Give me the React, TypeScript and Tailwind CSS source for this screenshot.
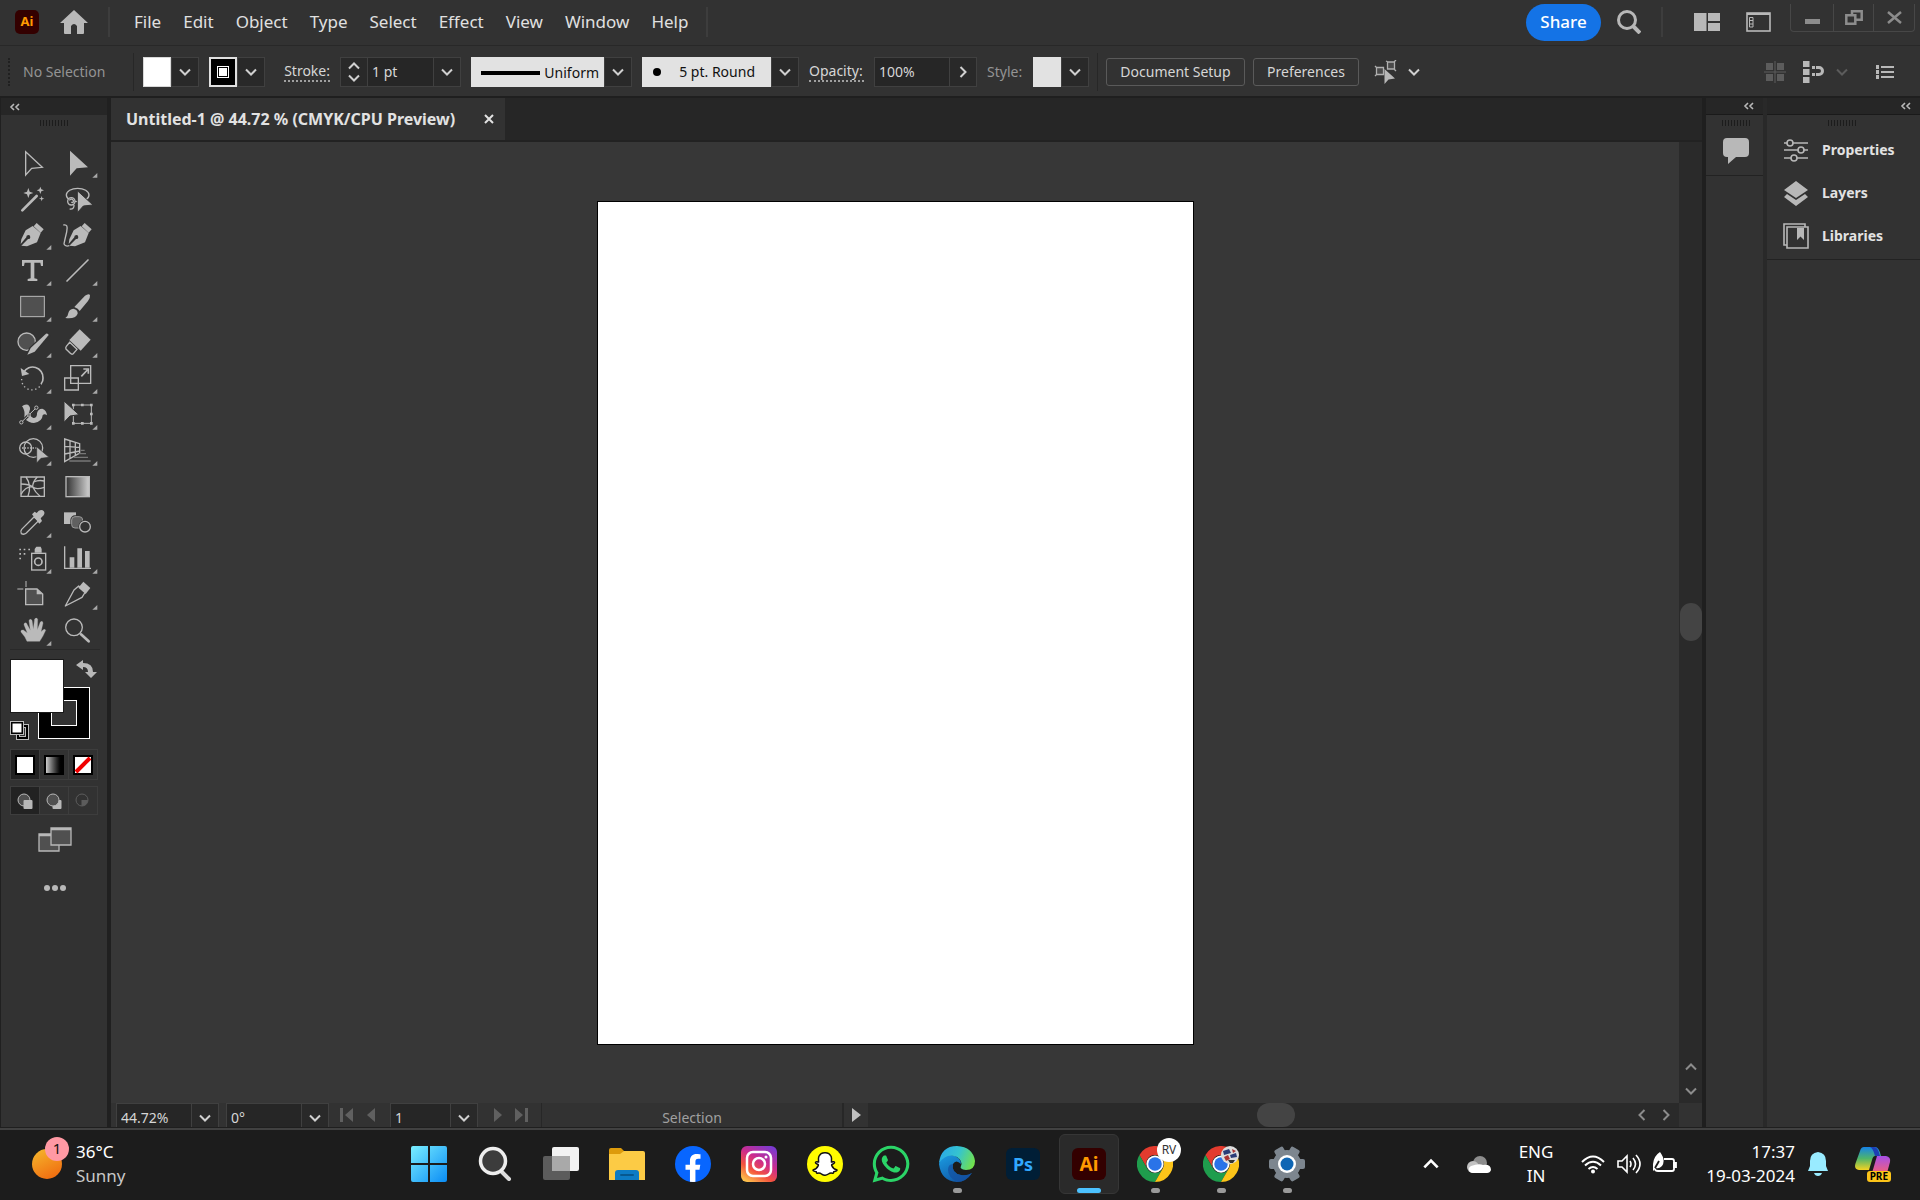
import type { ReactNode } from "react";
import { FaFacebookF, FaSnapchatGhost, FaWhatsapp } from "react-icons/fa";

const MENUS = ["File", "Edit", "Object", "Type", "Select", "Effect", "View", "Window", "Help"];

interface Tool {
  name: string;
  y: number;
  flyout?: boolean;
  icon: ReactNode;
}

// Tool icons are drawn three units to the pixel: left column starts at x=27, right column at x=165.
const LEFT_TOOLS: Tool[] = [
  {
    name: "Selection",
    y: 150,
    icon: <path d="M77 170V240L95 220L127 217Z" fill="none" stroke="#bababa" strokeWidth="4" />,
  },
  {
    name: "Magic Wand",
    y: 258,
    icon: (
      <>
        <path d="M67 346L110 303" stroke="#bababa" strokeWidth="8" strokeLinecap="round" />
        <path
          d="M85 279l4 11 11 4-11 4-4 11-4-11-11-4 11-4zM121 275l3 8 8 3-8 3-3 8-3-8-8-3 8-3zM125 303l2 6 6 2-6 2-2 6-2-6-6-2 6-2z"
          fill="#bababa"
        />
      </>
    ),
  },
  {
    name: "Pen",
    y: 366,
    flyout: true,
    icon: (
      <path
        d="M110 384l21 19-9 10-21-19zM98 393l24 21-11 28-30 12-17-2 20-20a6 6 0 1 0-5-5l-17 20 2-14 13-27z"
        fill="#bababa"
      />
    ),
  },
  {
    name: "Type",
    y: 474,
    flyout: true,
    icon: <path d="M66 495h63v18h-6l-2-10h-18v47l9 2v6H83v-6l9-2v-47H74l-2 10h-6z" fill="#bababa" />,
  },
  {
    name: "Rectangle",
    y: 582,
    flyout: true,
    icon: <rect x="62" y="604" width="71" height="61" fill="#505050" stroke="#bababa" strokeWidth="3" />,
  },
  {
    name: "Shaper",
    y: 690,
    flyout: true,
    icon: (
      <>
        <circle cx="80" cy="740" r="26" fill="#505050" stroke="#bababa" strokeWidth="4" />
        <path d="M84 779l8-18 46-45 8 8-44 46z" fill="#bababa" stroke="#323232" strokeWidth="10" />
        <path d="M82 779l10-20 46-43q6-2 8 4L104 770z" fill="#bababa" />
      </>
    ),
  },
  {
    name: "Rotate",
    y: 798,
    flyout: true,
    icon: (
      <>
        <path d="M71 832A31 31 0 0 1 129 849Q130 858 123 867" fill="none" stroke="#bababa" strokeWidth="5" />
        <path d="M62 819l4 24 22-6z" fill="#bababa" />
        <path d="M65 852A31 31 0 0 0 124 867" fill="none" stroke="#bababa" strokeWidth="4" strokeDasharray="4 8" />
      </>
    ),
  },
  {
    name: "Width",
    y: 906,
    flyout: true,
    icon: (
      <>
        <path
          d="M66 934q8-8 18-5q10 8 4 20q-2 14 12 20q12 0 11-14q2-14 16-14q13 5 14 20q-8-7-13 0q-1 19-26 23q-16 0-30-14q4-16-1-27q-2-6-5-9z"
          fill="#bababa"
        />
        <path d="M64 982L108 939" stroke="#323232" strokeWidth="9" />
        <path d="M64 982L108 939" stroke="#bababa" strokeWidth="3" />
        <g fill="#323232" stroke="#bababa" strokeWidth="3">
          <circle cx="64" cy="982" r="5" />
          <circle cx="87" cy="960" r="4" />
          <circle cx="109" cy="938" r="5" />
        </g>
      </>
    ),
  },
  {
    name: "Shape Builder",
    y: 1014,
    flyout: true,
    icon: (
      <>
        <g fill="none" stroke="#bababa" strokeWidth="4">
          <circle cx="100" cy="1059" r="28" />
          <circle cx="77" cy="1059" r="18" />
        </g>
        <path d="M66 1059h44" stroke="#bababa" strokeWidth="4" strokeDasharray="4 4" />
        <path d="M110 1055v49l13-14 24-3z" fill="#bababa" stroke="#323232" strokeWidth="2" />
      </>
    ),
  },
  {
    name: "Mesh",
    y: 1122,
    icon: (
      <g fill="none" stroke="#bababa" strokeWidth="4">
        <path d="M63 1146h70v58H63z" />
        <path d="M63 1167Q88 1167 98 1176T133 1177M63 1198Q78 1172 98 1176M78 1146Q96 1172 84 1204M112 1146Q98 1160 98 1176Q106 1192 120 1204M101 1161Q116 1154 133 1158" />
      </g>
    ),
  },
  {
    name: "Eyedropper",
    y: 1230,
    flyout: true,
    icon: (
      <>
        <path d="M102 1266L65 1303q-5 6-1 13q8 4 15-2l37-37z" fill="none" stroke="#bababa" strokeWidth="4" />
        <path d="M96 1258l8-8 6 4q8-12 18-8q9 6 3 15l-9 9 4 8-8 8z" fill="#bababa" />
      </>
    ),
  },
  {
    name: "Symbol Sprayer",
    y: 1338,
    flyout: true,
    icon: (
      <>
        <path d="M58 1361h5v5h-5zM71 1361h5v5h-5zM85 1361h5v5h-5zM58 1374h5v5h-5zM71 1374h5v5h-5zM58 1388h5v5h-5zM104 1362l5-7h13l3 7v11h-21z" fill="#bababa" />
        <rect x="95" y="1375" width="42" height="50" fill="none" stroke="#bababa" strokeWidth="4" />
        <circle cx="115" cy="1400" r="11" fill="none" stroke="#bababa" strokeWidth="5" />
      </>
    ),
  },
  {
    name: "Artboard",
    y: 1446,
    icon: (
      <>
        <path d="M78 1458v18M52 1482h18" stroke="#bababa" strokeWidth="3" />
        <path d="M77 1482h34l17 15v32H77z" fill="#505050" stroke="#bababa" strokeWidth="4" />
        <path d="M110 1482v16h18z" fill="#bababa" />
      </>
    ),
  },
  {
    name: "Hand",
    y: 1554,
    flyout: true,
    icon: (
      <path
        d="M81 1639q-5-14-18-28q-2-7 7-6l12 9-10-25q0-7 7-5l12 22-4-29q3-8 9-1l4 27 4-31q6-6 9 1l-1 31 9-23q7-5 8 3l-6 26 7-6q5-3 7 2q-8 19-18 33z"
        fill="#bababa"
        stroke="#bababa"
        strokeLinejoin="round"
      />
    ),
  },
];

const RIGHT_TOOLS: Tool[] = [
  { name: "Direct Selection", y: 150, flyout: true, icon: <path d="M210 167V242L230 220L264 217Z" fill="#bababa" /> },
  {
    name: "Lasso",
    y: 258,
    icon: (
      <>
        <ellipse cx="233" cy="300" rx="34" ry="20" fill="none" stroke="#bababa" strokeWidth="4" />
        <circle cx="214" cy="319" r="11" fill="#323232" stroke="#bababa" strokeWidth="4" />
        <path d="M208 316q6-8 12 0q1 10-6 5M209 342q14 2 13-12" fill="none" stroke="#bababa" strokeWidth="4" />
        <path d="M232 287v66l18-20 29-3z" fill="#bababa" stroke="#323232" strokeWidth="3" />
      </>
    ),
  },
  {
    name: "Curvature",
    y: 366,
    icon: (
      <>
        <path
          d="M254 384l21 19-9 10-21-19zM242 393l24 21-11 28-30 12-17-2 20-20a6 6 0 1 0-5-5l-17 20 2-14 13-27z"
          fill="#bababa"
        />
        <path d="M190 390q16-4 10 21t-8 36q4 9 16 5" fill="none" stroke="#bababa" strokeWidth="4" />
      </>
    ),
  },
  {
    name: "Line Segment",
    y: 474,
    flyout: true,
    icon: <path d="M201 558L264 495" stroke="#bababa" strokeWidth="5" strokeLinecap="round" />,
  },
  {
    name: "Paintbrush",
    y: 582,
    flyout: true,
    icon: (
      <path
        d="M196 669q8-4 9-15q3-12 15-13q14 3 13 15q-7 17-37 13zM223 636l32-34q11-8 15-2q1 10-6 18l-25 30q-4-8-16-12z"
        fill="#bababa"
      />
    ),
  },
  {
    name: "Eraser",
    y: 690,
    flyout: true,
    icon: (
      <>
        <path d="M239 703l33 31-30 33-34-32z" fill="#bababa" />
        <path d="M209 742l22 21-12 14q-4 2-8-2l-13-13q-2-4 1-8z" fill="none" stroke="#bababa" strokeWidth="4" />
      </>
    ),
  },
  {
    name: "Scale",
    y: 798,
    flyout: true,
    icon: (
      <>
        <path d="M212 812h60v53h-60zM194 849h41v36h-41z" fill="none" stroke="#bababa" strokeWidth="4" />
        <path d="M244 844l18-19M250 822h15v14" fill="none" stroke="#bababa" strokeWidth="5" />
      </>
    ),
  },
  {
    name: "Free Transform",
    y: 906,
    flyout: true,
    icon: (
      <>
        <rect x="220" y="930" width="54" height="55" fill="none" stroke="#bababa" strokeWidth="3" />
        <path d="M216 926h8v8h-8zM243 926h8v8h-8zM270 926h8v8h-8zM270 953h8v8h-8zM270 981h8v8h-8zM243 981h8v8h-8zM216 981h8v8h-8z" fill="#bababa" />
        <path d="M192 918v64l18-19 27-4z" fill="#bababa" stroke="#323232" strokeWidth="3" />
      </>
    ),
  },
  {
    name: "Perspective Grid",
    y: 1014,
    flyout: true,
    icon: (
      <>
        <path d="M194 1032l45 14v28l-45 26zM210 1037v53M226 1042v38M194 1054l45 3M194 1077l45-9" fill="none" stroke="#bababa" strokeWidth="4" />
        <path d="M242 1066h12M236 1076h22M222 1087h42M208 1098h64" stroke="#777" strokeWidth="4" />
      </>
    ),
  },
  {
    name: "Gradient",
    y: 1122,
    icon: (
      <>
        <defs>
          <linearGradient id="tool-gradient">
            <stop stopColor="#323232" />
            <stop offset="1" stopColor="#d0d0d0" />
          </linearGradient>
        </defs>
        <rect x="198" y="1145" width="70" height="60" fill="url(#tool-gradient)" stroke="#bababa" strokeWidth="4" />
      </>
    ),
  },
  {
    name: "Blend",
    y: 1230,
    icon: (
      <>
        <path d="M192 1252h36v35h-36z" fill="#bababa" />
        <rect x="215" y="1265" width="33" height="34" rx="10" fill="#606060" stroke="#323232" strokeWidth="8" />
        <rect x="215" y="1265" width="33" height="34" rx="10" fill="#606060" stroke="#999" strokeWidth="3" />
        <circle cx="255" cy="1295" r="20" fill="#323232" />
        <circle cx="255" cy="1295" r="16" fill="#323232" stroke="#bababa" strokeWidth="4" />
      </>
    ),
  },
  {
    name: "Column Graph",
    y: 1338,
    flyout: true,
    icon: (
      <>
        <path d="M194 1354v66h79" fill="none" stroke="#bababa" strokeWidth="4" />
        <path d="M209 1387h14v31h-14zM232 1360h14v58h-14zM255 1368h14v50h-14z" fill="#bababa" />
      </>
    ),
  },
  {
    name: "Slice",
    y: 1446,
    flyout: true,
    icon: (
      <>
        <path d="M196 1533l26-48 14-12 20 18-10 16z" fill="none" stroke="#bababa" strokeWidth="4" strokeLinejoin="round" />
        <path d="M250 1460l21 19-14 18-22-19z" fill="#bababa" />
      </>
    ),
  },
  {
    name: "Zoom",
    y: 1554,
    icon: (
      <>
        <circle cx="222" cy="1597" r="25" fill="none" stroke="#bababa" strokeWidth="4" />
        <path d="M243 1618l23 21" stroke="#bababa" strokeWidth="8" strokeLinecap="round" />
      </>
    ),
  },
];

function ToolColumn({ tools, x }: { tools: Tool[]; x: number }) {
  return (
    <div className="flex flex-col">
      {tools.map((tool) => (
        <button key={tool.name} aria-label={tool.name} className="h-9 w-[46px]">
          <svg viewBox={`${x} ${tool.y} 138 108`} className="h-9 w-[46px]">
            {tool.icon}
            {tool.flyout && <path d={`M${x + 127} ${tool.y + 84}v14h-15z`} fill="#a8a8a8" />}
          </svg>
        </button>
      ))}
    </div>
  );
}

function Chevron({ dir = "down", className = "h-3 w-3 text-[#d0d0d0]" }: { dir?: "down" | "up" | "left" | "right"; className?: string }) {
  const paths = {
    down: "M1 3.5L6 8.5L11 3.5",
    up: "M1 8.5L6 3.5L11 8.5",
    left: "M8.5 1L3.5 6L8.5 11",
    right: "M3.5 1L8.5 6L3.5 11",
  };
  return (
    <svg viewBox="0 0 12 12" className={className}>
      <path d={paths[dir]} fill="none" stroke="currentColor" strokeWidth="2" />
    </svg>
  );
}

function DropButton({ label, dir = "down" }: { label: string; dir?: "down" | "right" }) {
  return (
    <button aria-label={label} className="flex h-full w-7 shrink-0 items-center justify-center border border-[#404040] bg-[#292929]">
      <Chevron dir={dir} />
    </button>
  );
}

function Divider() {
  return <div className="h-[38px] w-px shrink-0 bg-[#272727]" />;
}

function Grip() {
  return (
    <div className="flex h-[6px] justify-center gap-[2px]">
      {Array.from({ length: 10 }, (_, i) => (
        <i key={i} className="w-px bg-[#1c1c1c]" />
      ))}
    </div>
  );
}

function DoubleChevron() {
  return (
    <svg viewBox="0 0 12 8" className="h-2 w-3">
      <path d="M5 1L2 4L5 7M10 1L7 4L10 7" fill="none" stroke="#b8b8b8" strokeWidth="1.6" />
    </svg>
  );
}

function TitleBar() {
  return (
    <header className="flex h-[46px] shrink-0 items-center border-b border-[#282828] pb-px">
      <div className="ml-[15px] flex h-6 w-6 items-center justify-center rounded-[5px] bg-[#330000] text-[13px] font-bold text-[#ff9a00]">
        Ai
      </div>
      <button aria-label="Home" className="ml-[21px]">
        <svg viewBox="0 0 28 24" className="h-6 w-7">
          <path d="M14 0L28 13H24V23Q24 24 23 24H17V16Q14 12 11 16V24H5Q4 24 4 23V13H0Z" fill="#b8b8b8" />
        </svg>
      </button>
      <div className="ml-5 h-[30px] w-[2px] bg-[#3d3d3d]" />
      <nav className="ml-6 flex gap-[22px] pb-px text-[17px] leading-6 text-[#e0e0e0]">
        {MENUS.map((menu) => (
          <button key={menu}>{menu}</button>
        ))}
      </nav>
      <div className="ml-[18px] h-[30px] w-[2px] bg-[#3d3d3d]" />
      <div className="ml-auto flex items-center">
        <button className="h-[37px] w-[75px] rounded-full bg-[#1473e6] text-[17px] font-medium text-white">Share</button>
        <button aria-label="Search" className="ml-4">
          <svg viewBox="0 0 24 24" className="h-6 w-6" fill="none" stroke="#b8b8b8" strokeWidth="3">
            <circle cx="10" cy="10" r="8.5" />
            <path d="M16 16l7 7" strokeWidth="4" />
          </svg>
        </button>
        <div className="ml-5 h-[30px] w-[2px] bg-[#3d3d3d]" />
        <button aria-label="Arrange documents" className="ml-[31px]">
          <svg viewBox="0 0 26 18" className="h-[18px] w-[26px]" fill="#b8b8b8">
            <path d="M0 0h12.500v18H0zM14 0h12v8H14zM14 10h12v8H14z" />
          </svg>
        </button>
        <button aria-label="Workspace" className="ml-[26px]">
          <svg viewBox="0 0 25 20" className="h-5 w-[25px]" fill="none" stroke="#b8b8b8">
            <rect x="1" y="1" width="23" height="18" strokeWidth="1.600" />
            <path d="M1 2h23" strokeWidth="2" />
            <path d="M3.500 5.500h3.500v9.500h-3.500zM4 8.500h3M4 12h3" />
          </svg>
        </button>
        <div className="mr-[5px] ml-[19px] flex h-7 self-start rounded-b border-x border-b border-[#474747]">
          <button aria-label="Minimize" className="flex w-[42px] items-center justify-center">
            <i className="mt-2 h-[5px] w-[15px] bg-[#8c8c8c]" />
          </button>
          <button aria-label="Restore" className="flex w-[41px] items-center justify-center border-x border-[#474747]">
            <svg viewBox="0 0 18 15" className="h-[15px] w-[18px]" fill="none" stroke="#8c8c8c" strokeWidth="2.500">
              <path d="M1.300 5.300h9v8.400h-9zM7 5V1.300h9.700v8.400H11" />
            </svg>
          </button>
          <button aria-label="Close" className="flex w-10 items-center justify-center">
            <svg viewBox="0 0 15 13" className="h-[13px] w-[15px]" stroke="#8c8c8c" strokeWidth="2.500">
              <path d="M1 1l13 11M14 1L1 12" />
            </svg>
          </button>
        </div>
      </div>
    </header>
  );
}

function ControlBar() {
  return (
    <div className="flex h-[52px] shrink-0 items-center gap-[10px] border-b-2 border-[#1f1f1f] pt-[2px] pl-2 text-[14px] leading-5 whitespace-nowrap text-[#d6d6d6]">
      <div className="flex w-[115px] items-center gap-[13px]">
        <div className="h-7 border-l-2 border-dotted border-[#202020]" />
        <span className="text-[#949494]">No Selection</span>
      </div>
      <div className="flex items-center gap-[9px]">
        <Divider />
        <div className="flex h-[30px]">
          <button aria-label="Fill" className="w-7 border border-[#d8d8d8] bg-white" />
          <DropButton label="Fill options" />
        </div>
      </div>
      <div className="flex h-[30px]">
        <button aria-label="Stroke color" className="flex w-7 items-center justify-center border-2 border-[#e0e0e0] bg-black">
          <i className="h-3 w-3 border border-white bg-black p-px">
            <i className="block h-2 w-2 bg-white" />
          </i>
        </button>
        <DropButton label="Stroke color options" />
      </div>
      <div className="flex w-[55px] justify-end">
        <label htmlFor="stroke-weight" className="border-b-2 border-dotted border-[#a0a0a0] leading-[18px]">
          Stroke:
        </label>
      </div>
      <div className="flex h-[30px] w-[121px]">
        <div className="flex w-7 shrink-0 flex-col items-center justify-between border border-[#404040] bg-[#292929] py-[2px]">
          <button aria-label="Increase">
            <Chevron dir="up" />
          </button>
          <button aria-label="Decrease">
            <Chevron />
          </button>
        </div>
        <input
          id="stroke-weight"
          defaultValue="1 pt"
          className="w-0 min-w-0 flex-1 border-y border-[#404040] bg-[#262626] px-1 outline-none"
        />
        <DropButton label="Stroke weights" />
      </div>
      <div className="flex h-[30px] w-[161px]">
        <button className="flex flex-1 items-center justify-between bg-[#e2e2e2] pt-[2px] pr-[5px] pl-[10px] text-[#111]">
          <i className="h-1 w-[59px] bg-black" />
          Uniform
        </button>
        <DropButton label="Width profiles" />
      </div>
      <div className="flex h-[30px] w-[157px]">
        <button className="flex flex-1 items-center justify-between bg-[#e2e2e2] pr-4 pl-[11px] text-[#111]">
          <i className="h-2 w-2 rounded-full bg-black" />
          5 pt. Round
        </button>
        <DropButton label="Brushes" />
      </div>
      <label htmlFor="opacity" className="w-[55px] border-b-2 border-dotted border-[#a0a0a0] leading-[18px]">
        Opacity:
      </label>
      <div className="flex h-[30px] w-[103px]">
        <input
          id="opacity"
          defaultValue="100%"
          className="w-0 min-w-0 flex-1 border-y border-l border-[#404040] bg-[#262626] px-1 outline-none"
        />
        <DropButton label="Opacity slider" dir="right" />
      </div>
      <span className="w-9 text-[#949494]">Style:</span>
      <div className="flex items-center gap-2">
        <div className="flex h-[30px]">
          <button aria-label="Graphic style" className="w-7 bg-[#e2e2e2]" />
          <DropButton label="Graphic styles" />
        </div>
        <Divider />
        <button className="h-7 w-[139px] rounded-[3px] border border-[#5a5a5a]">Document Setup</button>
        <button className="h-7 w-[106px] rounded-[3px] border border-[#5a5a5a]">Preferences</button>
      </div>
      <button aria-label="Select similar objects" className="ml-[5px] flex items-center gap-[10px]">
        <svg viewBox="0 0 24 24" className="h-6 w-6" fill="#4a4a4a" stroke="#b0b0b0" strokeWidth="1.300">
          <path d="M2.500 7.500h7v7h-7zM13.500 2h7v7h-7zM1 6l2 2M1 16l2-2M12 1l2 1M22 0l-2 2M22 11l-2-2" />
          <path d="M10.500 9v15l4-4.500 6.500-1z" fill="#b8b8b8" stroke="none" />
        </svg>
        <Chevron />
      </button>
      <div className="mr-[26px] ml-auto flex items-center">
        <svg viewBox="0 0 22 22" className="h-[22px] w-[22px]" fill="#5c5c5c">
          <path d="M2 2h7v7H2zM13 2h7v7h-7zM2 13h7v7H2zM13 13h7v7h-7zM10.500 0h1v22h-1zM0 10.500h22v1H0z" />
        </svg>
        <button aria-label="Snap to glyph" className="ml-[17px]">
          <svg viewBox="0 0 22 22" className="h-[22px] w-[22px]" fill="#b8b8b8">
            <path d="M0 0h6.500v6H0zM0 8h6.500v6H0zM0 16h6.500v6H0zM9 5h3v3H9zM9 12h3v3H9z" />
            <path d="M13 6.500h3a3.500 3.500 0 0 1 0 7h-3" fill="none" stroke="#b8b8b8" strokeWidth="3" />
          </svg>
        </button>
        <Chevron className="ml-[11px] h-3 w-3 text-[#5c5c5c]" />
        <button aria-label="Panel menu" className="ml-7">
          <svg viewBox="0 0 18 14" className="h-[14px] w-[18px]" fill="#b8b8b8">
            <path d="M0 0h3v4H0zM0 5h3v4H0zM0 10h3v4H0zM5 1h13v2H5zM5 6h13v2H5zM5 11h13v2H5z" />
          </svg>
        </button>
      </div>
    </div>
  );
}

function Toolbar() {
  return (
    <aside className="flex w-[111px] shrink-0 flex-col border-r-4 border-l border-[#202020]">
      <div className="flex h-[17px] shrink-0 items-center bg-[#262626] pl-2">
        <DoubleChevron />
      </div>
      <div className="h-[30px] pt-[5px]">
        <Grip />
      </div>
      <div className="ml-2 flex">
        <ToolColumn tools={LEFT_TOOLS} x={27} />
        <ToolColumn tools={RIGHT_TOOLS} x={165} />
      </div>
      <div className="ml-[9px] w-[90px] border-t border-[#292929] pt-2">
        <svg viewBox="0 0 88 84" className="h-[84px] w-[88px]">
          <rect x="28.500" y="29.500" width="51" height="51" fill="#000" stroke="#fff" />
          <rect x="41.500" y="42.500" width="25" height="25" fill="#323232" stroke="#fff" />
          <rect x=".5" y="1.500" width="53" height="53" fill="#fff" stroke="#1a1a1a" />
          <path d="M66 7l7-5v3q10 0 10 9h4l-6 6-6-6h3q0-5-5-5v3z" fill="#b8b8b8" />
          <path d="M8 72v8h9V68h-4" fill="none" stroke="#bbb" strokeWidth="4" />
          <path d="M8 72v8h9V68h-4" fill="none" stroke="#000" strokeWidth="2" />
          <rect x="1.500" y="64.500" width="11" height="11" fill="#fff" stroke="#000" strokeWidth="2" />
          <rect x=".5" y="63.500" width="13" height="13" fill="none" stroke="#bbb" />
        </svg>
      </div>
      <div className="mt-[7px] ml-[9px] flex h-[31px] w-[88px] divide-x divide-[#3d3d3d] border border-[#3d3d3d]">
        <button aria-label="Color" className="flex flex-1 items-center justify-center bg-[#222]">
          <i className="h-5 w-5 border-2 border-black bg-white" />
        </button>
        <button aria-label="Gradient fill" className="flex flex-1 items-center justify-center">
          <i className="h-5 w-5 border-2 border-black bg-linear-to-r from-[#ccc] to-black" />
        </button>
        <button aria-label="None" className="flex flex-1 items-center justify-center">
          <svg viewBox="0 0 20 20" className="h-5 w-5">
            <rect x="1" y="1" width="18" height="18" fill="#fff" stroke="#000" strokeWidth="2" />
            <path d="M3 17L17 3" stroke="#f00000" strokeWidth="4" />
          </svg>
        </button>
      </div>
      <div className="mt-[6px] ml-[9px] flex h-[29px] w-[88px] divide-x divide-[#3d3d3d] border border-[#3d3d3d]">
        <button aria-label="Draw Normal" className="flex flex-1 items-center justify-center bg-[#222]">
          <svg viewBox="0 0 16 16" className="h-4 w-4">
            <circle cx="7" cy="7" r="6" fill="#505050" stroke="#b8b8b8" />
            <rect x="6.500" y="7" width="9" height="9" rx="1" fill="#b8b8b8" />
          </svg>
        </button>
        <button aria-label="Draw Behind" className="flex flex-1 items-center justify-center">
          <svg viewBox="0 0 16 16" className="h-4 w-4">
            <rect x="6.500" y="7" width="9" height="9" rx="1" fill="#b8b8b8" />
            <circle cx="7" cy="7" r="6" fill="#505050" stroke="#b8b8b8" />
          </svg>
        </button>
        <button aria-label="Draw Inside" disabled className="flex flex-1 items-center justify-center">
          <svg viewBox="0 0 16 16" className="h-4 w-4">
            <circle cx="7" cy="7" r="6" fill="none" stroke="#5c5c5c" />
            <path d="M6.500 7h6.500a6 6 0 0 1-6.500 6z" fill="#5c5c5c" />
          </svg>
        </button>
      </div>
      <button aria-label="Screen mode" className="mt-[12px] ml-[37px] w-[34px]">
        <svg viewBox="0 0 34 26" className="h-[26px] w-[34px]" fill="#505050" stroke="#b8b8b8" strokeWidth="1.300">
          <path d="M1 7h20v17H1zM1 8.500h20" />
          <path d="M13 1h20v17H13zM13 2.500h20" />
        </svg>
      </button>
      <button aria-label="Edit toolbar" className="mt-8 ml-[43px] flex gap-[2px]">
        <i className="h-[6px] w-[6px] rounded-full bg-[#b8b8b8]" />
        <i className="h-[6px] w-[6px] rounded-full bg-[#b8b8b8]" />
        <i className="h-[6px] w-[6px] rounded-full bg-[#b8b8b8]" />
      </button>
    </aside>
  );
}

function StatusField({ label, value, width }: { label: string; value: string; width: string }) {
  return (
    <div className={`flex h-[30px] shrink-0 ${width}`}>
      <input
        aria-label={label}
        defaultValue={value}
        className="w-0 min-w-0 flex-1 border border-r-0 border-[#404040] bg-[#262626] px-1 outline-none"
      />
      <DropButton label={`${label} presets`} />
    </div>
  );
}

function StepButton({ label, d }: { label: string; d: string }) {
  return (
    <button aria-label={label} disabled>
      <svg viewBox="0 0 14 14" className="h-[14px] w-[14px]" fill="#606060">
        <path d={d} />
      </svg>
    </button>
  );
}

function StatusBar() {
  return (
    <div className="flex h-6 shrink-0 overflow-hidden bg-[#2a2a2a] text-[14px] leading-6 text-[#d6d6d6]">
      <div className="flex w-[757px] shrink-0 bg-[#323232] pl-[5px]">
        <StatusField label="Zoom level" value="44.72%" width="w-[103px]" />
        <div className="w-[7px]" />
        <StatusField label="Rotate view" value="0°" width="w-[103px]" />
        <div className="flex w-[61px] items-center justify-center gap-[11px]">
          <StepButton label="First artboard" d="M0 0h3v14H0zM13 0v14L5 7z" />
          <StepButton label="Previous artboard" d="M10 0v14L2 7z" />
        </div>
        <StatusField label="Artboard" value="1" width="w-[88px]" />
        <div className="flex w-[64px] items-center justify-center gap-2 border-r border-[#272727]">
          <StepButton label="Next artboard" d="M2 0v14l8-7z" />
          <StepButton label="Last artboard" d="M11 0h3v14h-3zM1 0v14l8-7z" />
        </div>
        <div className="flex-1 border-r-2 border-[#272727] pt-[3px] text-center text-[#a0a0a0]">Selection</div>
        <button aria-label="Status options" className="w-6 pl-2">
          <svg viewBox="0 0 9 14" className="h-[14px] w-[9px]" fill="#c0c0c0">
            <path d="M0 0v14l9-7z" />
          </svg>
        </button>
      </div>
      <div className="flex flex-1 items-center">
        <div className="ml-[48%] h-full w-[38px] rounded-xl bg-[#444]" />
        <button aria-label="Scroll left" className="ml-auto">
          <Chevron dir="left" className="h-3 w-3 text-[#8c8c8c]" />
        </button>
        <button aria-label="Scroll right" className="mr-[7px] ml-3">
          <Chevron dir="right" className="h-3 w-3 text-[#8c8c8c]" />
        </button>
      </div>
      <div className="w-[23px] bg-[#323232]" />
    </div>
  );
}

function DocumentArea() {
  return (
    <main className="flex min-w-0 flex-1 flex-col">
      <div className="flex h-[44px] shrink-0 border-b-2 border-[#222] bg-[#262626]">
        <div className="flex w-[394px] items-center justify-between bg-[#323232] pr-[11px] pl-[15px] text-[16px] font-bold text-[#e2e2e2]">
          <span className="whitespace-nowrap">Untitled-1 @ 44.72 % (CMYK/CPU Preview)</span>
          <button aria-label="Close document">
            <svg viewBox="0 0 10 10" className="h-[10px] w-[10px]" stroke="#e2e2e2" strokeWidth="2">
              <path d="M1 1l8 8M9 1L1 9" />
            </svg>
          </button>
        </div>
      </div>
      <div className="flex min-h-0 flex-1">
        <div className="flex flex-1 items-center justify-center bg-[#373737]">
          <div className="h-[842px] w-[595px] bg-white outline outline-black" />
        </div>
        <div className="flex w-[23px] flex-col items-center bg-[#2a2a2a]">
          <div className="h-[48%]" />
          <div className="h-[38px] w-[22px] rounded-xl bg-[#444]" />
          <button aria-label="Scroll up" className="mt-auto">
            <Chevron dir="up" className="h-3 w-3 text-[#8c8c8c]" />
          </button>
          <button aria-label="Scroll down" className="mt-3 mb-[6px]">
            <Chevron className="h-3 w-3 text-[#8c8c8c]" />
          </button>
        </div>
      </div>
      <StatusBar />
    </main>
  );
}

function PanelRow({ label, children }: { label: string; children: ReactNode }) {
  return (
    <button className="flex h-[42px] items-center gap-[13px] pl-4">
      <svg viewBox="0 0 26 26" className="h-[26px] w-[26px]">
        {children}
      </svg>
      {label}
    </button>
  );
}

function Panels() {
  return (
    <>
      <aside className="flex w-[61px] shrink-0 flex-col border-l-4 border-[#1f1f1f]">
        <div className="flex h-[17px] items-center justify-end border-b border-[#1a1a1a] bg-[#262626] pr-2">
          <DoubleChevron />
        </div>
        <div className="flex h-[61px] flex-col items-center gap-3 border-b border-[#222] pt-[5px] pl-[2px]">
          <Grip />
          <button aria-label="Comments">
            <svg viewBox="0 0 26 26" className="h-[26px] w-[26px]">
              <path d="M4 0h18q4 0 4 4v11q0 4-4 4H13l-8 7v-7H4q-4 0-4-4V4q0-4 4-4z" fill="#b8b8b8" />
            </svg>
          </button>
        </div>
      </aside>
      <aside className="flex w-[157px] shrink-0 flex-col border-l-4 border-[#292929]">
        <div className="flex h-[17px] shrink-0 items-center justify-end border-b border-[#1a1a1a] bg-[#262626] pr-2">
          <DoubleChevron />
        </div>
        <div className="flex flex-col gap-px border-b border-[#222] pt-[5px] pb-[2px] text-[14px] leading-5 font-bold text-[#e2e2e2]">
          <div className="pr-1 pb-[2px]">
            <Grip />
          </div>
          <PanelRow label="Properties">
            <g fill="#323232" stroke="#b8b8b8" strokeWidth="1.600">
              <path d="M1 6h24M1 13h24M1 21h24" />
              <circle cx="7" cy="6" r="3" />
              <circle cx="18" cy="13" r="3" />
              <circle cx="11" cy="21" r="3" />
            </g>
          </PanelRow>
          <PanelRow label="Layers">
            <path d="M13 1L25 10L13 18L1 10ZM4 14L13 20L22 14L25 17L13 26L1 17Z" fill="#b8b8b8" />
          </PanelRow>
          <PanelRow label="Libraries">
            <path d="M4 22H1V1h21v3M4 4h21v21H4z" fill="none" stroke="#b8b8b8" strokeWidth="1.600" />
            <path d="M14 5h7v12l-3.500-3.500L14 17z" fill="#b8b8b8" />
          </PanelRow>
        </div>
      </aside>
    </>
  );
}

function Chrome({ children }: { children: ReactNode }) {
  return (
    <span className="relative">
      <svg viewBox="0 0 48 48" className="h-9 w-9">
        <path d="M24 12H44.800A24 24 0 0 0 3.200 12L13.600 30A12 12 0 0 1 24 12z" fill="#e33b2e" />
        <path d="M13.600 30L3.200 12A24 24 0 0 0 24 48L34.400 30A12 12 0 0 1 13.600 30z" fill="#1f9d4d" />
        <path d="M24 12H44.800A24 24 0 0 1 24 48L34.400 30A12 12 0 0 0 24 12z" fill="#fcc419" />
        <circle cx="24" cy="24" r="11.500" fill="#fff" />
        <circle cx="24" cy="24" r="9" fill="#2a73e8" />
      </svg>
      {children}
    </span>
  );
}

const APPS: { name: string; state?: "open" | "active"; icon: ReactNode }[] = [
  {
    name: "Start",
    icon: (
      <svg viewBox="0 0 36 36" className="h-9 w-9">
        <defs>
          <linearGradient id="start" x1="0" y1="0" x2="36" y2="36" gradientUnits="userSpaceOnUse">
            <stop stopColor="#7aefff" />
            <stop offset="1" stopColor="#0a8cf5" />
          </linearGradient>
        </defs>
        <path d="M2 0H17V17H0V2Q0 0 2 0zM19 0H34Q36 0 36 2V17H19zM0 19H17V36H2Q0 36 0 34zM19 19H36V34Q36 36 34 36H19z" fill="url(#start)" />
      </svg>
    ),
  },
  {
    name: "Search",
    icon: (
      <svg viewBox="0 0 36 36" className="h-9 w-9">
        <path d="M24 25L32 33" stroke="#ddd" strokeWidth="4" strokeLinecap="round" />
        <circle cx="16" cy="15" r="12.500" fill="#3c3c3c" stroke="#eee" strokeWidth="3.500" />
      </svg>
    ),
  },
  {
    name: "Task View",
    icon: (
      <svg viewBox="0 0 36 36" className="h-9 w-9">
        <rect y="10" width="27" height="24" rx="2" fill="#5c5c5c" />
        <rect x="9" y="1" width="27" height="24" rx="2" fill="#f2f2f2" />
        <path d="M9 10h18v15H9z" fill="#a9a9a9" />
      </svg>
    ),
  },
  {
    name: "File Explorer",
    icon: (
      <svg viewBox="0 0 36 36" className="h-9 w-9">
        <path d="M0 4Q0 2 2 2H12L15 5V9H0z" fill="#dd9b0c" />
        <path d="M0 8H11L15 5H34Q36 5 36 7V34H0z" fill="#fccb45" />
        <path d="M6 34V27Q6 24 9 24H27Q30 24 30 27V34z" fill="#0d7bc4" />
        <path d="M12 29H24" stroke="#07588f" strokeWidth="2" strokeLinecap="round" />
      </svg>
    ),
  },
  {
    name: "Facebook",
    icon: (
      <span className="flex h-9 w-9 items-end justify-center overflow-hidden rounded-full bg-[#0866ff]">
        <FaFacebookF className="h-7 w-7 text-white" />
      </span>
    ),
  },
  {
    name: "Instagram",
    icon: (
      <svg viewBox="0 0 36 36" className="h-9 w-9" fill="none" stroke="#fff" strokeWidth="2.500">
        <defs>
          <linearGradient id="insta" x1=".2" y1="1" x2=".8" y2="0">
            <stop stopColor="#fdc04c" />
            <stop offset=".3" stopColor="#f4533e" />
            <stop offset=".6" stopColor="#cc2c8e" />
            <stop offset="1" stopColor="#7b3ad1" />
          </linearGradient>
        </defs>
        <rect width="36" height="36" rx="6" fill="url(#insta)" stroke="none" />
        <rect x="6" y="6" width="24" height="24" rx="6" />
        <circle cx="18" cy="18" r="6" />
        <circle cx="25" cy="11" r="1.500" fill="#fff" stroke="none" />
      </svg>
    ),
  },
  {
    name: "Snapchat",
    icon: (
      <span className="flex h-9 w-9 items-center justify-center rounded-full bg-[#fffc00]">
        <FaSnapchatGhost className="h-6 w-6 overflow-visible text-white" stroke="#111" strokeWidth="32" />
      </span>
    ),
  },
  { name: "WhatsApp", icon: <FaWhatsapp className="h-[42px] w-[42px] text-[#2bd467]" /> },
  {
    name: "Edge",
    state: "open",
    icon: (
      <svg viewBox="0 0 36 36" className="h-9 w-9">
        <defs>
          <linearGradient id="edge-top" y1=".3" x2="1" y2=".6">
            <stop stopColor="#2aa9e8" />
            <stop offset=".5" stopColor="#35c4cf" />
            <stop offset="1" stopColor="#72e14c" />
          </linearGradient>
          <linearGradient id="edge-low" x2=".6" y2="1">
            <stop stopColor="#1b9de2" />
            <stop offset="1" stopColor="#1059a8" />
          </linearGradient>
        </defs>
        <path d="M0 18Q1 8 12 9Q22 11 22 18Q17 13 14 18Q12 27 22 29Q28 30 33 27Q27 36 18 36Q2 35 0 18z" fill="url(#edge-low)" />
        <path d="M14 18Q12 27 22 29Q28 30 33 27Q27 36 18 36Q9 31 9 24Q9 18 14 18z" fill="#1450a0" opacity=".7" />
        <path d="M0 17Q2 0 18 0Q34 1 36 15Q36 24 27 24Q20 23 22 20Q24 15 18 11Q8 6 0 17z" fill="url(#edge-top)" />
      </svg>
    ),
  },
  {
    name: "Photoshop",
    icon: (
      <span className="flex h-8 w-[34px] items-center justify-center rounded-md bg-[#001e36] text-[18px] font-bold text-[#31a8ff]">Ps</span>
    ),
  },
  {
    name: "Illustrator",
    state: "active",
    icon: (
      <span className="flex h-8 w-[34px] items-center justify-center rounded-md bg-[#330000] text-[19px] font-bold text-[#ff9a00]">Ai</span>
    ),
  },
  {
    name: "Chrome RV",
    state: "open",
    icon: (
      <Chrome>
        <span className="absolute -top-2 -right-2 flex h-6 w-6 items-center justify-center rounded-full bg-white text-[12px] text-[#333]">
          RV
        </span>
      </Chrome>
    ),
  },
  {
    name: "Chrome",
    state: "open",
    icon: (
      <Chrome>
        <svg viewBox="0 0 18 18" className="absolute top-0 right-0 h-[18px] w-[18px]">
          <circle cx="9" cy="9" r="9" fill="#ddd" />
          <path d="M2 5l6-2 2 4-7 2zM9 9l6-2 1 4-6 1z" fill="#2a3c78" />
          <path d="M3 11l4-2 2 4-4 2zM11 3l4 2-3 2z" fill="#a33" />
          <path d="M7 14h7l-2 3H9z" fill="#333" />
        </svg>
      </Chrome>
    ),
  },
  {
    name: "Settings",
    state: "open",
    icon: (
      <svg viewBox="0 0 36 36" className="h-9 w-9">
        <g fill="#7d868f">
          <circle cx="18" cy="18" r="14" />
          <rect y="13" width="36" height="10" rx="2" />
          <rect y="13" width="36" height="10" rx="2" transform="rotate(60 18 18)" />
          <rect y="13" width="36" height="10" rx="2" transform="rotate(120 18 18)" />
        </g>
        <circle cx="18" cy="18" r="9" fill="#fff" />
        <circle cx="18" cy="18" r="6.500" fill="#0f66b4" />
      </svg>
    ),
  },
];

function Taskbar() {
  return (
    <footer className="flex h-[72px] shrink-0 items-center border-t-2 border-[#414141] bg-[#1c1c1c] pb-[2px] text-[17px] leading-6 text-white">
      <button className="flex w-[396px] items-center gap-[7px] pl-8 text-left">
        <svg viewBox="0 0 37 42" className="mb-3 h-[42px] w-[37px]">
          <defs>
            <linearGradient id="sun" x1=".2" x2=".7" y2="1">
              <stop stopColor="#f5b32b" />
              <stop offset="1" stopColor="#f06c10" />
            </linearGradient>
          </defs>
          <circle cx="15" cy="27" r="15" fill="url(#sun)" />
          <circle cx="25" cy="12" r="12" fill="#ff99a4" />
          <text x="25" y="17" textAnchor="middle" fontSize="15" fill="#111">
            1
          </text>
        </svg>
        <span>
          36°C
          <span className="block text-[#c8c8c8]">Sunny</span>
        </span>
      </button>
      <nav className="flex">
        {APPS.map((app) => (
          <button
            key={app.name}
            aria-label={app.name}
            className={`relative mx-[3px] flex h-[60px] w-[60px] items-center justify-center rounded-md ${
              app.state === "active" ? "border border-[#363636] bg-[#2a2a2a]" : ""
            }`}
          >
            {app.icon}
            {app.state === "open" && <i className="absolute bottom-[1px] h-[5px] w-[9px] rounded-full bg-[#9a9a9a]" />}
            {app.state === "active" && <i className="absolute bottom-0 h-[5px] w-6 rounded-full bg-[#4cc2ff]" />}
          </button>
        ))}
      </nav>
      <div className="mr-[29px] ml-auto flex items-center">
        <Chevron dir="up" className="h-4 w-4 text-white" />
        <svg viewBox="0 0 24 17" className="ml-7 h-[17px] w-6">
          <circle cx="13" cy="7" r="7" fill="#8d8d8d" />
          <circle cx="6" cy="11" r="6" fill="#c2c2c2" />
          <path d="M3 16Q0 12 4 10Q12 7 16 9Q24 8 24 14Q23 17 20 17H6Q4 17 3 16z" fill="#fff" />
        </svg>
        <div className="ml-5 w-[50px] text-center">
          ENG
          <br />
          IN
        </div>
        <button aria-label="Network, volume and battery" className="ml-5 flex gap-3">
          <svg viewBox="0 0 24 24" className="h-6 w-6" fill="none" stroke="#fff" strokeWidth="2">
            <path d="M1 10Q12-1 23 10M4 13.500Q12 6 20 13.500M7.500 17Q12 13 16.500 17" />
            <circle cx="12" cy="19.500" r="2" fill="#fff" stroke="none" />
          </svg>
          <svg viewBox="0 0 24 24" className="h-6 w-6" fill="none" stroke="#fff" strokeWidth="1.600">
            <path d="M1 9v6h4l5 5V4L5 9zM13 9q2 3 0 6M16 6q5 6 0 12M19 3q8 9 0 18" />
          </svg>
          <svg viewBox="0 0 24 24" className="h-6 w-6" fill="none" stroke="#fff" strokeWidth="1.800">
            <path d="M11 7h8q2 0 2 2v8q0 2-2 2H5q-3 0-3-2" />
            <path d="M21 11h2v4h-2z" fill="#fff" />
            <path d="M0 17Q-1 5 7 0Q13 8 9 14Q6 17 3 16L0 19z" fill="#fff" stroke="none" />
            <path d="M2 16L6 9" stroke="#1c1c1c" />
          </svg>
        </button>
        <div className="w-[118px] text-right">
          17:37
          <br />
          19-03-2024
        </div>
        <svg viewBox="0 0 20 24" className="ml-[13px] h-6 w-5" fill="#99ebff">
          <path d="M10 0q8 1 8 9v5l2 5H0l2-5V9q0-8 8-9zM6 21h8q-1 3-4 3t-4-3z" />
        </svg>
        <span className="relative ml-[27px]">
          <svg viewBox="0 0 36 36" className="h-9 w-9">
            <defs>
              <linearGradient id="copilot-a" x2="0" y2="1">
                <stop stopColor="#1683e8" />
                <stop offset=".5" stopColor="#4fb56a" />
                <stop offset="1" stopColor="#f5d321" />
              </linearGradient>
              <linearGradient id="copilot-b" x2="0" y2="1">
                <stop stopColor="#a64fe8" />
                <stop offset="1" stopColor="#f2607b" />
              </linearGradient>
            </defs>
            <path d="M9 1H20q4 0 6 9H20q-2 0-3 4L14 24H4q-6-1-3-8L5 5q1-4 4-4z" fill="url(#copilot-a)" />
            <path d="M19 1q4 0 6 9H20q-2-8-5-9z" fill="#1d3fb4" />
            <path d="M22 10h9q5 1 4 6l-3 11H17z" fill="url(#copilot-b)" />
          </svg>
          <span className="absolute right-0 bottom-0 rounded-[3px] bg-[#fcc419] px-[3px] text-[10px] leading-[11px] font-bold text-black">PRE</span>
        </span>
      </div>
    </footer>
  );
}

export default function App() {
  return (
    <div className="flex h-screen flex-col overflow-hidden bg-[#323232] font-['Noto_Sans','Open_Sans',sans-serif]">
      <TitleBar />
      <ControlBar />
      <div className="flex min-h-0 flex-1 border-b border-[#1f1f1f]">
        <Toolbar />
        <DocumentArea />
        <Panels />
      </div>
      <Taskbar />
    </div>
  );
}
